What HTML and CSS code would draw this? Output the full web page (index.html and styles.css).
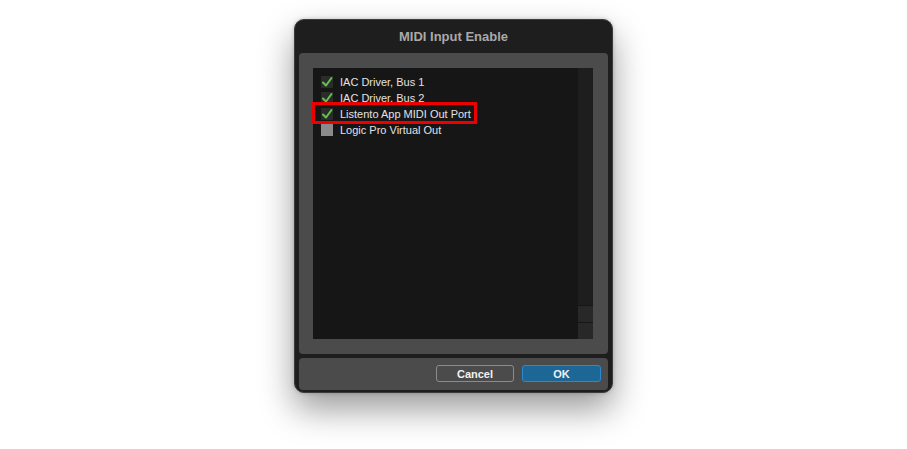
FILE: index.html
```html
<!DOCTYPE html>
<html lang="en">
<head>
  <meta charset="UTF-8" />
  <meta name="viewport" content="width=device-width, initial-scale=1.0"/>
  <title>MIDI Input Enable</title>
  <link rel="stylesheet" href="styles.css">
</head>
<body>

<div class="dialog">
  <div class="title">MIDI Input Enable</div>

  <div class="panel">
    <div class="list">
      <div class="items">
        <div class="item">
          <span class="box checked"><svg viewBox="0 0 12 12"><polyline points="2,6.5 5,9.5 10.5,2"/></svg></span>
          <span>IAC Driver, Bus 1</span>
        </div>
        <div class="item">
          <span class="box checked"><svg viewBox="0 0 12 12"><polyline points="2,6.5 5,9.5 10.5,2"/></svg></span>
          <span>IAC Driver, Bus 2</span>
        </div>
        <div class="item highlight">
          <span class="box checked"><svg viewBox="0 0 12 12"><polyline points="2,6.5 5,9.5 10.5,2"/></svg></span>
          <span>Listento App MIDI Out Port</span>
          <span class="marker"></span>
        </div>
        <div class="item">
          <span class="box"></span>
          <span>Logic Pro Virtual Out</span>
        </div>
      </div>
      <div class="scrollbar">
        <div class="track"></div>
        <div class="arrow"></div>
        <div class="arrow"></div>
      </div>
    </div>
  </div>

  <div class="footer">
    <button class="btn">Cancel</button>
    <button class="btn primary">OK</button>
  </div>
</div>

</body>
</html>
```

FILE: styles.css
```css
html, body {
  height: 100%;
}
body {
  margin: 0;
  background: #ffffff;
  font-family: "Liberation Sans", Arial, sans-serif;
  display: flow-root;
}
.dialog {
  width: 319px;
  height: 374px;
  margin: 19px auto 0;
  box-sizing: border-box;
  background: #1e1e1e;
  border: 1px solid #3c3c3c;
  border-radius: 10px;
  box-shadow: 0 16px 34px rgba(0,0,0,0.4), 0 0 4px rgba(0,0,0,0.2);
  display: flex;
  flex-direction: column;
  padding: 0 4px 2px;
}
.title {
  height: 33px;
  display: flex;
  align-items: center;
  justify-content: center;
  color: #a9a9a9;
  font-size: 13px;
  font-weight: bold;
}
.panel {
  height: 301px;
  background: #4b4b4b;
  border-radius: 4px;
  padding: 15px 15px 15px 14px;
  box-sizing: border-box;
}
.list {
  height: 100%;
  background: #161616;
  display: flex;
}
.items {
  flex: 1;
  padding-top: 5.5px;
}
.item {
  position: relative;
  height: 16.2px;
  display: flex;
  align-items: center;
  gap: 7px;
  padding-left: 8px;
  color: #e2e2e2;
  font-size: 11px;
}
.box {
  width: 12px;
  height: 12px;
  background: #8a8a8a;
  display: flex;
}
.box.checked {
  background: #2b2b2b;
}
.box svg {
  width: 12px;
  height: 12px;
  fill: none;
  stroke: #66c24c;
  stroke-width: 2;
  stroke-linecap: round;
  stroke-linejoin: round;
}
.marker {
  position: absolute;
  left: -1px;
  top: -4px;
  width: 165px;
  height: 22px;
  box-sizing: border-box;
  border: 3px solid #ee0000;
}
.scrollbar {
  width: 15px;
  background: #1e1e1e;
  display: flex;
  flex-direction: column;
}
.track {
  flex: 1;
}
.arrow {
  height: 16px;
  background: #282828;
  border-top: 1px solid #161616;
}
.footer {
  margin-top: 4px;
  height: 32px;
  background: #4b4b4b;
  border-radius: 4px;
  display: flex;
  justify-content: flex-end;
  align-items: center;
  gap: 8px;
  padding-right: 7px;
}
.btn {
  width: 78px;
  height: 17px;
  border: 1px solid #8c8c8c;
  border-radius: 3px;
  background: #4b4b4b;
  color: #f2f2f2;
  font-family: "Liberation Sans", Arial, sans-serif;
  font-size: 11px;
  font-weight: bold;
  padding: 0;
  margin-top: -1px;
}
.btn.primary {
  width: 79px;
  background: #1d6796;
  border-color: #2a8ad0;
}
```
